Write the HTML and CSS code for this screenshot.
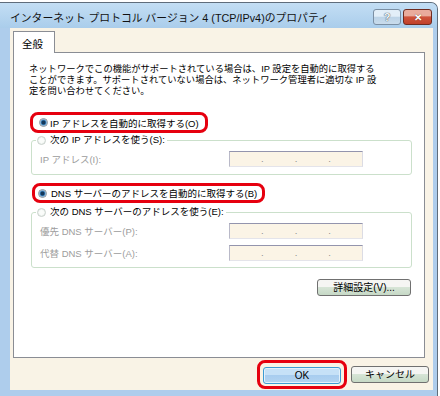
FILE: index.html
```html
<!DOCTYPE html>
<html lang="ja">
<head>
    <meta charset="UTF-8">
    <title>インターネット プロトコル バージョン 4 (TCP/IPv4)のプロパティ</title>
    <link rel="stylesheet" href="styles.css">
</head>
<body>
    <div class="window">
        <div class="titlebar">
            <span class="title">インターネット プロトコル バージョン 4 (TCP/IPv4)のプロパティ</span>
            <div class="caption-btns">
                <span class="cap-btn help">?</span>
                <span class="cap-btn close">✕</span>
            </div>
        </div>

        <div class="dialog">
            <div class="tabs">
                <div class="tab">全般</div>
            </div>

            <div class="panel">
                <p class="desc">ネットワークでこの機能がサポートされている場合は、IP 設定を自動的に取得する<br>ことができます。サポートされていない場合は、ネットワーク管理者に適切な IP 設<br>定を問い合わせてください。</p>

                <!-- red marks are annotations from the manual -->
                <div class="mark mark-ip">
                    <span class="radio checked"></span>
                    <span>IP アドレスを自動的に取得する(O)</span>
                </div>

                <fieldset class="group group-ip">
                    <legend><span class="radio"></span><span>次の IP アドレスを使う(S):</span></legend>
                    <div class="row">
                        <span class="row-label">IP アドレス(I):</span>
                        <div class="ipbox"><span></span><i>.</i><span></span><i>.</i><span></span><i>.</i><span></span></div>
                    </div>
                </fieldset>

                <div class="mark mark-dns">
                    <span class="radio checked"></span>
                    <span>DNS サーバーのアドレスを自動的に取得する(B)</span>
                </div>

                <fieldset class="group group-dns">
                    <legend><span class="radio"></span><span>次の DNS サーバーのアドレスを使う(E):</span></legend>
                    <div class="row">
                        <span class="row-label">優先 DNS サーバー(P):</span>
                        <div class="ipbox"><span></span><i>.</i><span></span><i>.</i><span></span><i>.</i><span></span></div>
                    </div>
                    <div class="row">
                        <span class="row-label">代替 DNS サーバー(A):</span>
                        <div class="ipbox"><span></span><i>.</i><span></span><i>.</i><span></span><i>.</i><span></span></div>
                    </div>
                </fieldset>

                <div class="adv-row">
                    <button class="btn adv-btn">詳細設定(V)...</button>
                </div>
            </div>

            <div class="footer">
                <span class="mark-ok"><button class="btn ok-btn">OK</button></span>
                <button class="btn cancel-btn">キャンセル</button>
            </div>
        </div>
    </div>
</body>
</html>
```

FILE: styles.css
```css
html {
    background: #fff;
}

body {
    margin: 0;
    font-family: "Liberation Sans", "Noto Sans CJK JP", sans-serif;
    font-size: 9.5px;
    color: #000;
}

.window {
    box-sizing: border-box;
    width: 438px;
    height: 394px;
    margin-top: 2px;
    border-top: 1px solid #5f6d7b;
    border-right: 1px solid #5f6d7b;
    border-radius: 0 7px 0 0;
    background: #aecdec;
    display: flex;
    flex-direction: column;
}

/* title bar */
.titlebar {
    height: 25px;
    flex: 0 0 25px;
    display: flex;
    align-items: flex-start;
    justify-content: space-between;
    padding: 6px 5px 0 10px;
    box-sizing: border-box;
    background: linear-gradient(#c3def4, #aacdeb);
    border-radius: 0 6px 0 0;
}

.title {
    font-size: 10.8px;
    line-height: 16px;
    padding-top: 1px;
    color: #111;
    white-space: nowrap;
}

.caption-btns {
    display: flex;
    gap: 2px;
}

.cap-btn {
    box-sizing: border-box;
    height: 16px;
    border-radius: 3px;
    display: flex;
    align-items: center;
    justify-content: center;
    font-weight: bold;
    color: #fff;
}

.help {
    width: 28px;
    border: 1px solid #7b8fa3;
    background: linear-gradient(#e2eef8 0 45%, #bcd3e7 50%, #c9dcec);
    font-size: 11px;
    color: #f4f8fb;
    text-shadow: 0 0 1px #44505c, 0 0 1px #44505c;
}

.close {
    width: 29px;
    border: 1px solid #6e2b20;
    background: linear-gradient(#e9ab9c 0 40%, #cf533b 50%, #c0402a);
    font-size: 10px;
    text-shadow: 0 0 1px #5a1a10;
}

/* dialog body */
.dialog {
    flex: 1;
    margin: 0 4px 6px 10px;
    padding: 3px 6px 0 3px;
    background: #f9f3e6;
    display: flex;
    flex-direction: column;
}

.tabs {
    display: flex;
    position: relative;
    z-index: 1;
    margin-bottom: -1px;
}

.tab {
    box-sizing: border-box;
    height: 22px;
    padding: 0 11px 0 8px;
    border: 1px solid #8a8d94;
    border-bottom: none;
    background: #fff;
    font-size: 10.5px;
    line-height: 24px;
}

.panel {
    flex: 1;
    margin-right: 2px;
    padding: 11px 12px 0 15px;
    border: 1px solid #8a8d94;
    background: #fff;
}

.desc {
    margin: 0;
    font-size: 9.3px;
    line-height: 11px;
    white-space: nowrap;
}

.radio {
    box-sizing: border-box;
    flex: 0 0 9px;
    width: 9px;
    height: 9px;
    border-radius: 50%;
    border: 1px solid #c9d1cc;
    background: radial-gradient(circle, #fafcfa 0 2px, #e7ede8 4px);
}

.radio.checked {
    border-color: #8a949c;
    background: radial-gradient(circle, #14385a 0 1.5px, #3e86c2 2.5px, #c7dcef 3.5px, #eef3f7 4px);
}

.mark {
    display: flex;
    align-items: center;
    gap: 2px;
    width: fit-content;
    box-sizing: border-box;
    border: 3px solid #e6000f;
    border-radius: 8px;
    white-space: nowrap;
}

.mark-ip {
    height: 21px;
    margin: 15px 0 0 1px;
    padding: 0 6px 0 6px;
}

.mark-dns {
    height: 20px;
    margin: 8px 0 0 3px;
    padding: 0 5px 0 3px;
    gap: 4px;
}

.group {
    margin: 1px 0 0 2px;
    padding: 5px 8px 7px 8px;
    border: 1px solid #cbe0cb;
    border-radius: 3px;
}

.group legend {
    display: flex;
    align-items: center;
    gap: 4px;
    margin-left: -4px;
    padding: 0 2px 0 1px;
    line-height: 12px;
    white-space: nowrap;
}

.group-dns {
    margin-top: 3px;
    padding-bottom: 6px;
    display: flex;
    flex-direction: column;
    gap: 6px;
}

.row {
    display: flex;
    align-items: center;
}

.row-label {
    flex: 0 0 189px;
    color: #9c9c9c;
}

.ipbox {
    box-sizing: border-box;
    width: 134px;
    height: 16px;
    display: flex;
    align-items: center;
    border: 1px solid;
    border-color: #9394ad #dcdce4 #e4e4ea #b9b9c8;
    background: #fbf4e6;
}

.ipbox span {
    flex: 1;
}

.ipbox i {
    font-style: normal;
    color: #8c8c8c;
    line-height: 12px;
}

.adv-row {
    display: flex;
    justify-content: flex-end;
    margin: 11px 1px 0 0;
}

.btn {
    box-sizing: border-box;
    height: 17px;
    padding: 0;
    border: 1px solid #707070;
    border-radius: 3px;
    background: linear-gradient(#f5f5f3 0 45%, #d6e4d6 50%, #c6d9c6);
    font-family: inherit;
    font-size: 10px;
    color: #000;
    line-height: 15px;
}

.adv-btn {
    width: 94px;
}

.footer {
    flex: 0 0 32px;
    display: flex;
    align-items: center;
    justify-content: flex-end;
    gap: 4px;
    margin-right: -2px;
}

.mark-ok {
    display: flex;
    padding: 4px 3px 2px;
    border: 3px solid #e6000f;
    border-radius: 8px;
}

.ok-btn {
    width: 78px;
    border-color: #3c9bd3;
    background: linear-gradient(#c6e1f7 0 45%, #a8cdef 50%, #b3d4f1);
    box-shadow: inset 0 0 0 1px #e3f1fb;
}

.cancel-btn {
    width: 78px;
}
```
